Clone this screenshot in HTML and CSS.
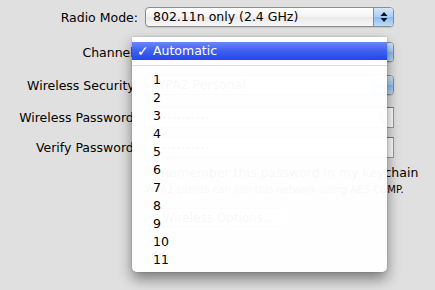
FILE: index.html
```html
<!DOCTYPE html>
<html lang="en">
<head>
  <meta charset="UTF-8" />
  <title>Wireless Settings</title>
  <link rel="stylesheet" href="styles.css">
</head>
<body>

<div class="prefs">
  <div class="row row-radio">
    <label class="lbl">Radio Mode:</label>
    <div class="popup">
      <span class="popup-text">802.11n only (2.4 GHz)</span>
      <span class="popup-arrows">
        <svg width="8" height="12" viewBox="0 0 8 12"><path d="M4 1 L7.5 5 L0.5 5 Z M0.5 7 L7.5 7 L4 11 Z" fill="#111"/></svg>
      </span>
    </div>
  </div>

  <div class="row row-channel">
    <label class="lbl">Channel:</label>
    <div class="popup">
      <span class="popup-text">Automatic</span>
      <span class="popup-arrows"></span>
    </div>
  </div>

  <div class="row row-security">
    <label class="lbl">Wireless Security:</label>
    <div class="popup">
      <span class="popup-text">WPA2 Personal</span>
      <span class="popup-arrows"></span>
    </div>
  </div>

  <div class="row row-pass">
    <label class="lbl">Wireless Password:</label>
    <div class="field">
      <span class="dots">••••••••••••</span>
      <svg class="key" width="10" height="14" viewBox="0 0 10 14"><circle cx="5" cy="4" r="3" fill="none" stroke="#999" stroke-width="1.5"/><path d="M5 7 V13 M5 10 H7.5 M5 12 H7" stroke="#999" stroke-width="1.5"/></svg>
    </div>
  </div>

  <div class="row row-verify">
    <label class="lbl">Verify Password:</label>
    <div class="field">
      <span class="dots">••••••••••••</span>
    </div>
  </div>

  <div class="check-row">
    <span class="checkbox"></span>
    <span>Remember this password in my keychain</span>
  </div>
  <div class="note">WPA2 clients can join this network using AES-CCMP.</div>
  <div class="btn-row">
    <button class="options-btn">Wireless Options...</button>
  </div>

  <!-- menu opened from the Channel popup -->
  <ul class="menu">
    <li class="menu-item selected"><span class="check">✓</span>Automatic</li>
    <li class="menu-sep"></li>
    <li class="menu-item">1</li>
    <li class="menu-item">2</li>
    <li class="menu-item">3</li>
    <li class="menu-item">4</li>
    <li class="menu-item">5</li>
    <li class="menu-item">6</li>
    <li class="menu-item">7</li>
    <li class="menu-item">8</li>
    <li class="menu-item">9</li>
    <li class="menu-item">10</li>
    <li class="menu-item">11</li>
  </ul>
</div>

</body>
</html>
```

FILE: styles.css
```css
body {
  margin: 0;
  background: #e0e0e0;
  font-family: "DejaVu Sans", sans-serif;
  font-size: 12.5px;
  color: #000;
  overflow: hidden;
}

.prefs {
  position: relative;
  height: 290px;
  padding-top: 7px;
  box-sizing: border-box;
}

.row {
  display: flex;
  align-items: center;
}

.lbl {
  width: 138px;
  text-align: right;
  margin-right: 7px;
}

.row-radio { height: 20px; }
.row-channel { height: 20px; margin-top: 15px; }
.row-security { height: 20px; margin-top: 13px; }
.row-pass { height: 21px; margin-top: 12px; }
.row-verify { height: 21px; margin-top: 9px; }

/* Aqua popup button */
.popup {
  width: 249px;
  height: 20px;
  box-sizing: border-box;
  display: flex;
  border: 1px solid #8c8c8c;
  border-radius: 4px;
  background: linear-gradient(#ffffff, #f3f3f3 50%, #e9e9e9 51%, #f7f7f7);
  box-shadow: 0 1px 1px rgba(0,0,0,0.12);
  overflow: hidden;
}

.popup-text {
  flex: 1;
  padding-left: 7px;
  line-height: 18px;
  white-space: nowrap;
}

.popup-arrows {
  width: 19px;
  display: flex;
  align-items: center;
  justify-content: center;
  border-left: 1px solid #6f8fc0;
  background: linear-gradient(#d3e6fb, #a9cdf6 50%, #8dbcf2 51%, #bcdcfb);
}

/* text fields */
.field {
  width: 249px;
  height: 21px;
  box-sizing: border-box;
  border: 1px solid #9a9a9a;
  border-top-color: #7a7a7a;
  background: #fff;
  display: flex;
  align-items: center;
  justify-content: space-between;
  padding: 0 5px 0 6px;
}

.dots {
  font-size: 9px;
  letter-spacing: -0.5px;
  color: #333;
}

.check-row {
  display: flex;
  align-items: center;
  height: 16px;
  margin-top: 6px;
  margin-left: 145px;
  white-space: nowrap;
}

.checkbox {
  width: 12px;
  height: 12px;
  box-sizing: border-box;
  border: 1px solid #888;
  border-radius: 2px;
  background: linear-gradient(#fff, #e4e4e4);
  margin-right: 4px;
}

.note {
  margin-top: 3px;
  margin-left: 145px;
  font-size: 10px;
  line-height: 14px;
  white-space: nowrap;
}

.btn-row {
  margin-top: 11px;
  margin-left: 147px;
}

.options-btn {
  width: 143px;
  height: 19px;
  border: 1px solid #999;
  border-radius: 10px;
  background: linear-gradient(#fff, #ececec);
  font-family: "DejaVu Sans", sans-serif;
  font-size: 12px;
  padding: 0;
}

/* Open popup menu */
.menu {
  position: absolute;
  left: 132px;
  top: 37px;
  width: 255px;
  margin: 0;
  padding: 5px 0 3px;
  list-style: none;
  background: rgba(255,255,255,0.97);
  border-radius: 0 0 5px 5px;
  box-shadow: 0 7px 14px rgba(0,0,0,0.45), 0 0 2px rgba(0,0,0,0.25);
}

.menu-item {
  height: 18px;
  line-height: 18px;
  padding-left: 21px;
  position: relative;
}

.menu-item.selected {
  color: #fff;
  background: linear-gradient(#6889f6, #3d60f0 50%, #2447e8);
}

.check {
  position: absolute;
  left: 5px;
  top: 0;
  font-size: 14px;
  font-weight: bold;
}

.menu-sep {
  height: 1px;
  margin: 5px 0;
  background: #dcdcdc;
}
```
